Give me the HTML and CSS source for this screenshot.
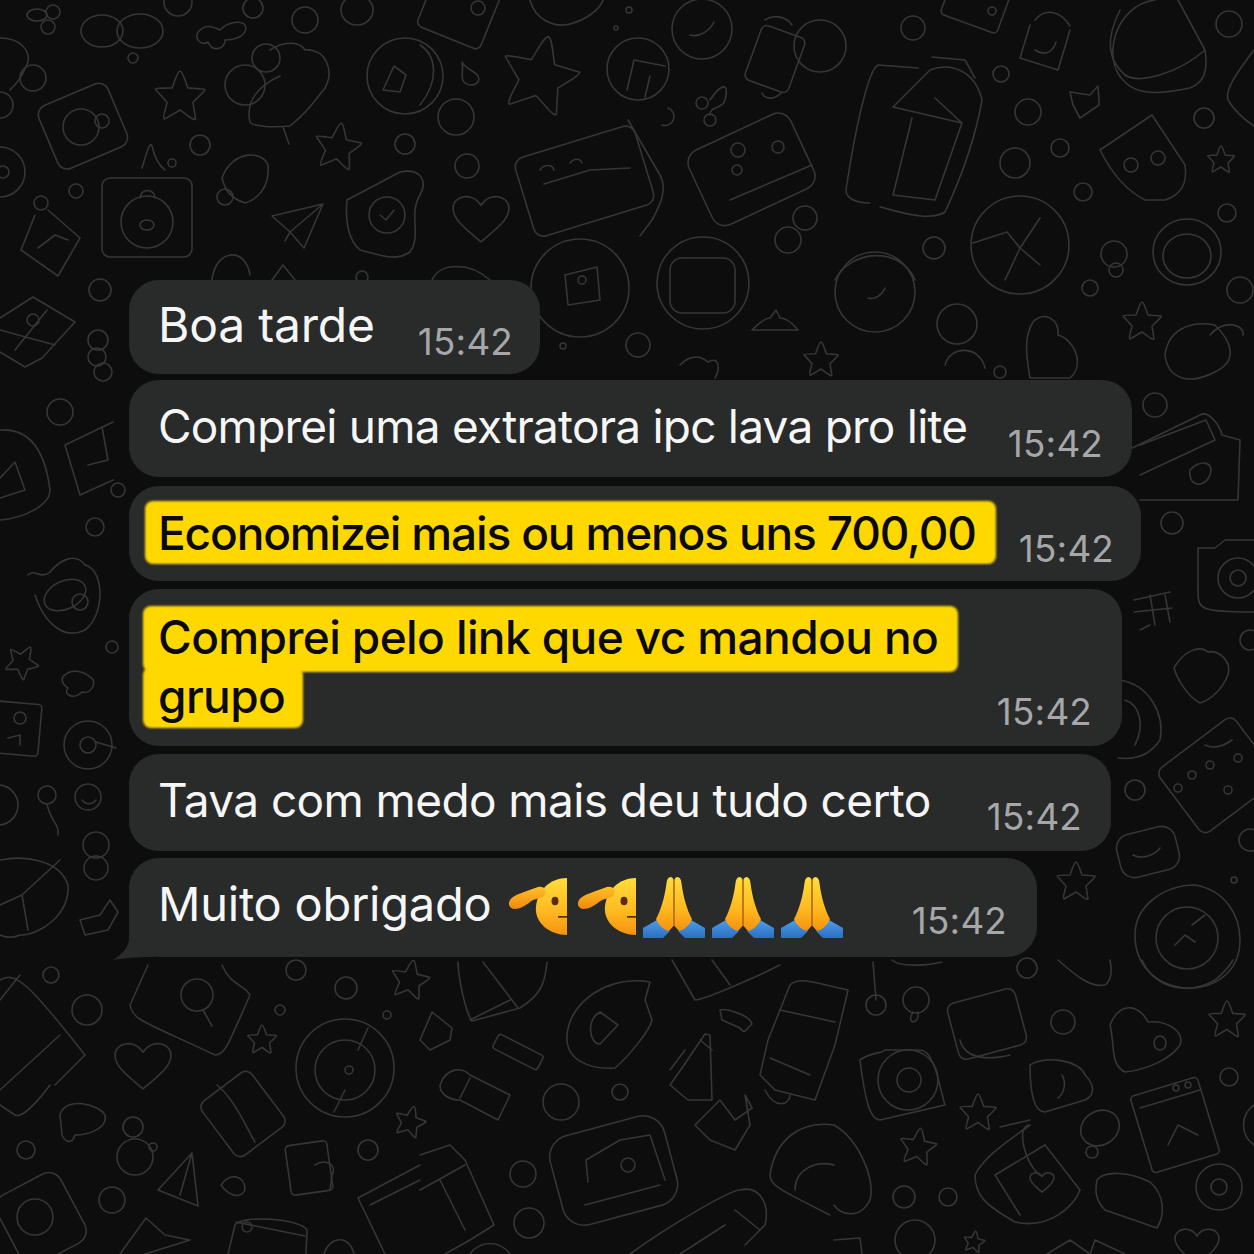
FILE: index.html
```html
<!DOCTYPE html>
<html lang="en">
<head>
    <meta charset="UTF-8">
    <title>Chat</title>
    <link rel="stylesheet" href="styles.css">
</head>
<body>
    <!-- wallpaper -->
    <svg class="doodles" viewBox="0 0 1254 1254" aria-hidden="true">
        <defs>
            <path id="star" d="M0 -1 C.1 -1 .2 -.6 .3 -.35 L.95 -.3 C1 -.25 .6 .1 .5 .2 L.6 .85 C.55 .95 .1 .55 0 .5 L-.6 .85 C-.7 .8 -.5 .3 -.5 .2 L-.95 -.3 C-.95 -.35 -.5 -.35 -.3 -.35 C-.2 -.6 -.1 -1 0 -1Z"/>
            <path id="heart" d="M0 .85 C-.4 .5 -1 .1 -1 -.35 C-1 -.8 -.3 -.95 0 -.45 C.3 -.95 1 -.8 1 -.35 C1 .1 .4 .5 0 .85Z"/>
        </defs>

        <!-- top left -->
        <ellipse cx="37" cy="15" rx="10" ry="6"/><circle cx="48" cy="27" r="7"/><circle cx="53" cy="12" r="7"/>
        <ellipse cx="102" cy="31" rx="21" ry="16"/><ellipse cx="140" cy="31" rx="23" ry="17"/>
        <circle cx="178" cy="2" r="14"/><circle cx="253" cy="8" r="10"/><circle cx="305" cy="20" r="13"/><ellipse cx="357" cy="10" rx="16" ry="15"/>
        <path d="M198 32 C205 24 212 26 220 30 C230 20 245 20 246 28 C245 38 232 40 225 40 C225 50 212 52 208 42 C202 46 194 40 198 32Z"/>
        <use href="#star" transform="translate(180 97) scale(26)"/>
        <rect x="45" y="92" width="75" height="68" rx="10" transform="rotate(-23 83 125)"/><circle cx="81" cy="127" r="18"/><circle cx="102" cy="121" r="7"/>
        <path d="M0 38 C20 38 30 50 28 62 C22 78 15 85 10 90"/><circle cx="33" cy="78" r="13"/><circle cx="0" cy="105" r="13"/>
        <circle cx="0" cy="172" r="25"/><circle cx="3" cy="172" r="6"/>
        <circle cx="133" cy="58" r="5"/><circle cx="76" cy="191" r="7"/>
        <circle cx="266" cy="58" r="14"/><circle cx="245" cy="85" r="20"/><path d="M270 50 C285 40 300 42 305 50 C325 48 335 70 325 88 C315 100 310 110 290 126 C270 128 252 126 250 122 C245 100 260 85 280 76"/><path d="M283 127 L289 144"/>
        <circle cx="405" cy="76" r="38"/><path d="M394 66 L406 75 L400 92 L383 90Z"/>
        <use href="#star" transform="translate(338 147) rotate(8) scale(24)"/>
        <circle cx="200" cy="145" r="10"/><circle cx="405" cy="144" r="10"/>
        <rect x="102" y="178" width="90" height="79" rx="8"/><circle cx="147" cy="222" r="26"/><ellipse cx="147" cy="225" rx="7" ry="5"/><path d="M140 198 C140 188 155 188 155 198"/><circle cx="172" cy="163" r="4"/><path d="M142 168 C146 155 150 140 152 146 C154 155 158 165 165 170"/>
        <circle cx="41" cy="203" r="7"/><path d="M48 210 L80 238 L58 276 L21 250 L35 215M38 248 L55 235 L68 240"/>
        <path d="M222 178 C232 150 262 150 268 165 C270 190 255 200 245 203 C230 198 225 190 222 178Z"/><circle cx="225" cy="197" r="8"/>
        <path d="M272 216 L323 204 L304 248 L290 232 Z M323 204 L290 232 L285 241"/>
        <path d="M347 200 L400 172 C420 168 428 180 420 195 C408 215 422 235 410 252 C395 262 380 255 360 250 C348 240 345 220 347 200Z"/><circle cx="387" cy="215" r="18"/><path d="M380 215 L386 220 L394 210"/>
        <path d="M212 280 C215 250 245 245 250 275"/><circle cx="362" cy="277" r="6"/><path d="M272 280 L283 265 L295 280"/>

        <!-- top middle -->
        <rect x="425" y="-22" width="68" height="62" rx="6" transform="rotate(22 459 9)"/><circle cx="478" cy="8" r="7"/>
        <path d="M530 0 C535 20 555 28 570 24 C585 20 600 10 603 0"/><circle cx="629" cy="10" r="3"/><circle cx="616" cy="28" r="2"/>
        <use href="#star" transform="translate(540 76) rotate(12) scale(40)"/>
        <path d="M462 62 C466 70 474 70 478 76 C482 84 470 88 464 82 C460 78 464 72 462 62Z"/>
        <path d="M420 45 C436 55 440 80 420 105"/>
        <circle cx="456" cy="117" r="18"/><circle cx="467" cy="166" r="12"/>
        <use href="#heart" transform="translate(481 218) scale(28)"/>
        <circle cx="638" cy="69" r="31"/><path d="M627 90 L634 60 L665 66M645 97 L650 76"/>
        <circle cx="702" cy="29" r="30"/><path d="M690 35 C700 38 710 30 714 22"/>
        <rect x="752" y="30" width="46" height="58" rx="6" transform="rotate(20 775 59)"/><path d="M765 20 C772 15 785 15 792 25M762 93 C765 100 775 100 782 92"/>
        <circle cx="820" cy="46" r="26"/>
        <path d="M710 100 C720 85 730 80 725 100 C722 110 710 105 710 115"/><circle cx="702" cy="103" r="6"/><circle cx="710" cy="120" r="6"/>
        <path d="M668 108 A9 9 0 1 1 662 125"/>
        <rect x="522" y="140" width="125" height="82" rx="10" transform="rotate(-17 585 181)"/><path d="M544 184 L590 170 L630 168 M628 120 L660 175 C668 190 660 205 652 220 L640 236"/><path d="M540 170 C544 164 552 164 554 170M570 163 C574 158 580 158 582 163"/>
        <rect x="695" y="128" width="112" height="82" rx="14" transform="rotate(-25 752 168)"/><circle cx="738" cy="150" r="7"/><circle cx="778" cy="147" r="6"/><circle cx="737" cy="170" r="5"/><path d="M730 200 L812 165"/>
        <circle cx="805" cy="218" r="12"/><circle cx="788" cy="240" r="13"/>
        <circle cx="580" cy="288" r="49"/><path d="M565 275 L597 267 L600 300 L568 305Z"/><circle cx="582" cy="280" r="4"/>
        <circle cx="703" cy="283" r="46"/><rect x="670" y="258" width="65" height="55" rx="12"/>
        <path d="M432 280 C440 262 470 262 490 280"/>

        <!-- top right -->
        <rect x="945" y="-15" width="60" height="40" rx="4" transform="rotate(20 975 5)"/><circle cx="992" cy="11" r="4"/>
        <path d="M1030 25 L1020 58 L1058 70 L1070 30 M1035 20 C1045 8 1060 10 1070 26"/><path d="M1035 50 C1042 55 1052 55 1056 42"/>
        <path d="M1155 0 C1115 5 1100 60 1125 82 C1140 98 1170 92 1190 88 C1205 82 1208 70 1205 50 L1178 0"/><path d="M1125 75 C1140 85 1180 72 1205 50"/><path d="M1120 10 C1105 40 1108 60 1125 75"/>
        <circle cx="1229" cy="24" r="13"/><circle cx="913" cy="28" r="12"/>
        <path d="M878 65 L918 68 M878 65 C868 70 855 130 846 190 C846 198 855 203 870 203"/>
        <path d="M893 107 L930 70 C950 62 975 70 982 100 C975 140 960 180 945 212 C930 222 900 212 880 207"/><path d="M893 107 L962 123 L935 200 L893 195 L912 118M935 98 L962 123M932 57 L965 60 L975 78"/>
        <circle cx="1001" cy="74" r="8"/><circle cx="1028" cy="112" r="13"/><circle cx="1015" cy="163" r="15"/><circle cx="1060" cy="148" r="9"/><circle cx="1083" cy="192" r="9"/>
        <circle cx="1204" cy="118" r="10"/><use href="#star" transform="translate(1221 160) scale(14)"/><circle cx="1227" cy="213" r="9"/>
        <path d="M1070 92 L1090 95 L1098 86 L1099 100 L1099 105 L1080 118 L1073 105Z"/>
        <path d="M1100 150 L1152 115 L1185 165 C1188 185 1180 195 1165 200 L1145 200 C1125 190 1110 170 1100 150Z"/><circle cx="1131" cy="165" r="7"/><circle cx="1158" cy="158" r="7"/>
        <circle cx="1020" cy="245" r="49"/><path d="M973 243 L1007 232 L1020 248 L1040 218 M1020 248 L1005 280 M1020 248 L1040 265"/>
        <circle cx="934" cy="248" r="11"/><path d="M835 280 C850 250 900 245 915 280"/>
        <circle cx="1114" cy="254" r="13"/><circle cx="1116" cy="270" r="7"/>
        <ellipse cx="1187" cy="252" rx="34" ry="33"/><ellipse cx="1187" cy="256" rx="24" ry="22"/>
        <path d="M1254 50 C1235 75 1225 90 1228 100 C1235 112 1245 120 1254 126"/>

        <!-- left edge -->
        <path d="M0 318 L33 297 L75 322 L42 358 L25 367 L0 352M0 330 L55 345M15 350 L47 310"/><circle cx="33" cy="320" r="6"/>
        <circle cx="100" cy="290" r="11"/><circle cx="98" cy="340" r="10"/><circle cx="97" cy="357" r="9"/><circle cx="103" cy="372" r="9"/>
        <circle cx="60" cy="412" r="13"/>
        <path d="M0 430 C30 428 45 450 50 490 C50 505 25 518 0 520M0 478 L15 462 L25 490 L0 498"/>
        <path d="M65 445 L113 422 M65 445 L80 495 L113 480"/><path d="M102 427 L108 460 L88 465"/><circle cx="118" cy="490" r="7"/>
        <circle cx="95" cy="527" r="9"/>
        <path d="M28 575 C35 568 40 580 50 572 C60 560 75 552 85 565 C105 570 105 615 85 630 C65 640 45 625 35 595"/><ellipse cx="65" cy="595" rx="22" ry="14" transform="rotate(-25 65 595)"/><circle cx="80" cy="602" r="8"/>
        <circle cx="112" cy="647" r="6"/>
        <use href="#star" transform="translate(22 662) rotate(30) scale(17)"/>
        <path d="M65 675 C72 668 85 672 90 677 C98 680 92 695 82 692 C75 700 62 695 68 688 C62 684 60 678 65 675Z"/>
        <rect x="-22" y="702" width="62" height="52" rx="4" transform="rotate(5 9 728)"/><circle cx="20" cy="718" r="6"/><path d="M8 738 L20 735 L20 745"/>
        <circle cx="88" cy="745" r="24"/><circle cx="88" cy="745" r="8"/><path d="M96 742 L116 748"/>
        <circle cx="-2" cy="805" r="20"/><circle cx="47" cy="795" r="9"/><path d="M47 804 C50 820 60 825 58 835"/>
        <circle cx="88" cy="797" r="13"/><path d="M82 800 C86 805 92 805 96 800"/>
        <circle cx="96" cy="845" r="13"/><circle cx="96" cy="868" r="12"/>
        <path d="M0 860 C25 855 60 860 68 885 C70 915 40 935 20 935 C10 940 0 935 0 935M60 860 L22 895 L28 930M22 895 L0 905"/>
        <path d="M80 920 L100 915 L110 900 L118 912 L108 930 L85 935Z"/>

        <!-- right edge -->
        <use href="#star" transform="translate(1142 322) scale(20)"/>
        <path d="M1165 355 C1168 330 1190 320 1215 325 C1230 340 1240 360 1215 372 C1190 385 1168 380 1165 355Z"/><path d="M1210 335 C1225 318 1245 325 1243 335"/>
        <circle cx="1240" cy="290" r="13"/><circle cx="1155" cy="405" r="12"/>
        <path d="M1128 450 L1200 415 C1208 410 1220 425 1222 435 L1240 440 L1238 500 L1140 500"/><path d="M1140 445 L1206 420 L1215 440 L1140 475"/><path d="M1190 470 C1198 460 1215 460 1210 475 C1205 488 1188 488 1190 470Z"/>
        <circle cx="1172" cy="523" r="11"/>
        <path d="M1198 590 L1198 548 L1215 548 L1225 540 L1254 540"/><path d="M1198 590 C1198 610 1200 612 1254 612"/><circle cx="1238" cy="578" r="20"/><circle cx="1238" cy="578" r="8"/>
        <path d="M1134 600 L1170 592 M1134 612 L1172 608 M1150 595 L1155 625 M1165 595 L1170 622 M1140 630 L1150 625"/>
        <path d="M1174 668 C1184 650 1200 645 1208 652 C1218 650 1232 660 1228 675 C1222 690 1210 700 1200 703 C1190 698 1178 682 1174 668Z"/><circle cx="1250" cy="640" r="10"/>
        <path d="M1120 680 C1150 685 1165 715 1160 740 C1150 755 1135 760 1118 758"/><path d="M1125 700 C1140 705 1145 725 1135 745"/>
        <rect x="1170" y="735" width="95" height="80" rx="8" transform="rotate(-37 1218 775)"/><circle cx="1178" cy="788" r="4"/><circle cx="1192" cy="775" r="4"/><circle cx="1210" cy="765" r="4"/><circle cx="1238" cy="758" r="4"/><circle cx="1228" cy="790" r="4"/><path d="M1205 745 C1215 750 1225 745 1232 740"/>
        <circle cx="1135" cy="790" r="10"/>
        <rect x="1118" y="830" width="60" height="44" rx="14" transform="rotate(-14 1148 852)"/><path d="M1133 855 C1142 860 1155 855 1160 848"/>
        <circle cx="1250" cy="840" r="11"/><circle cx="1234" cy="880" r="3"/>
        <path d="M1135 935 C1135 905 1165 885 1195 885 C1225 890 1240 915 1240 940 C1240 975 1210 990 1185 988 C1155 985 1135 965 1135 935Z"/><circle cx="1187" cy="938" r="31"/><path d="M1175 945 L1185 935 L1195 942 M1192 925 L1205 915"/>
        <use href="#star" transform="translate(1076 882) scale(20)"/>

        <!-- band over the bubbles -->
        <circle cx="638" cy="345" r="12"/><circle cx="563" cy="346" r="3"/>
        <path d="M680 365 C690 355 700 355 708 362 C720 355 720 370 715 378"/>
        <use href="#star" transform="translate(821 360) scale(18)"/>
        <path d="M752 330 L798 330 C790 320 785 318 780 318 L776 310 L770 318 C765 318 760 322 752 330Z"/>
        <circle cx="875" cy="292" r="40"/><path d="M868 298 C875 300 882 295 885 288"/>
        <circle cx="957" cy="324" r="20"/><path d="M945 365 C950 345 980 345 985 368"/>
        <path d="M1033 322 C1045 310 1060 320 1058 335 C1075 340 1085 365 1070 378 L1030 378 C1025 350 1025 335 1033 322Z"/>
        <circle cx="1090" cy="288" r="8"/><circle cx="1000" cy="372" r="6"/>

        <!-- bottom left -->
        <path d="M0 980 C15 970 30 985 85 1055 L55 1085 M0 1000 L20 975 M0 1090 L60 1035M0 1105 L15 1115 C25 1120 50 1085 50 1085"/><circle cx="87" cy="1010" r="15"/><circle cx="51" cy="975" r="8"/>
        <path d="M148 965 L130 1005 C132 1020 145 1022 215 1055 C225 1055 228 1045 250 995 C245 985 230 985 222 965"/><circle cx="197" cy="995" r="16"/><path d="M203 1010 L212 1026"/>
        <use href="#star" transform="translate(262 1040) scale(15)"/>
        <circle cx="280" cy="1010" r="5"/><circle cx="296" cy="970" r="10"/><circle cx="346" cy="988" r="11"/><circle cx="387" cy="1015" r="4"/>
        <use href="#star" transform="translate(410 980) rotate(10) scale(20)"/>
        <circle cx="345" cy="1068" r="49"/><circle cx="345" cy="1070" r="30"/><circle cx="349" cy="1070" r="4"/><path d="M334 1112 L345 1090 M368 1028 L358 1050"/>
        <use href="#heart" transform="translate(143 1065) scale(28)"/>
        <rect x="212" y="1082" width="62" height="68" rx="8" transform="rotate(-37 240 1115)"/><path d="M217 1085 C235 1100 245 1125 255 1142"/>
        <path d="M60 1115 C65 1095 100 1105 105 1115 C108 1130 85 1135 75 1135 C72 1145 65 1142 62 1135Z"/>
        <circle cx="133" cy="1127" r="10"/><circle cx="135" cy="1157" r="18"/><circle cx="153" cy="1147" r="4"/>
        <path d="M192 1153 L158 1190 L198 1206Z M192 1153 L180 1195"/>
        <circle cx="26" cy="1150" r="9"/><circle cx="112" cy="1200" r="13"/>
        <path d="M221 1185 C230 1172 245 1175 245 1190 C240 1200 228 1195 221 1185Z"/>
        <rect x="288" y="1143" width="42" height="50" rx="4" transform="rotate(-8 309 1168)"/><path d="M315 1165 C325 1158 338 1165 332 1175 L330 1190"/>
        <circle cx="368" cy="1150" r="10"/><use href="#star" transform="translate(410 1122) rotate(15) scale(16)"/>
        <rect x="5" y="1180" width="72" height="78" rx="14" transform="rotate(-28 41 1219)"/><circle cx="35" cy="1217" r="18"/>
        <path d="M120 1254 L146 1218 L165 1235 L190 1240 L145 1254"/>
        <path d="M228 1254 L235 1225 C240 1215 300 1218 307 1230 L306 1254M236 1222 L305 1236"/><circle cx="247" cy="1227" r="5"/>
        <path d="M324 1254 C330 1235 350 1235 354 1254"/>
        <path d="M358 1198 L420 1165 M358 1198 L385 1254M370 1205 L420 1180"/>

        <!-- bottom middle -->
        <path d="M458 962 C458 975 465 1012 472 1021 L520 1008 C540 995 545 985 547 962M483 962 L518 1008M470 1020 L510 1000"/>
        <path d="M420 1040 L432 1012 L452 1028 L450 1040 L430 1050Z"/>
        <rect x="493" y="1044" width="50" height="16" rx="3" transform="rotate(27 518 1052)"/>
        <path d="M440 1085 C445 1070 460 1065 470 1075 L510 1095 L498 1120 L460 1100 C450 1100 440 1095 440 1085Z"/><path d="M460 1098 L470 1078"/>
        <circle cx="561" cy="1102" r="18"/><circle cx="620" cy="1092" r="8"/>
        <path d="M650 982 C610 975 570 1000 567 1035 C565 1060 590 1070 615 1068 C630 1055 650 1030 652 1020 L645 1000 Z"/><path d="M600 1012 C585 1020 590 1045 600 1044 L618 1025Z"/>
        <path d="M682 1068 L705 1034 L710 1035 L712 1100 L688 1100 L670 1085Z"/><path d="M670 1070 L685 1050 M700 1040 L712 1050"/>
        <path d="M720 1010 C725 1008 750 1015 752 1024 C745 1030 745 1035 740 1028 L722 1020Z"/>
        <rect x="555" y="1125" width="118" height="92" rx="22" transform="rotate(-15 612 1172)"/><path d="M586 1160 L620 1140 L650 1135 L665 1180 M586 1160 L588 1182M585 1205 L660 1185"/><circle cx="628" cy="1165" r="7"/>
        <circle cx="523" cy="1174" r="13"/><circle cx="529" cy="1223" r="15"/>
        <path d="M420 1155 L450 1145 L465 1160 L494 1225 L470 1240 L445 1254M440 1180 L465 1230 M420 1190 L465 1165"/>
        <path d="M470 1254 C480 1240 500 1240 510 1254"/>
        <path d="M720 1100 L735 1120 L752 1108 L745 1095 L750 1125 L735 1150 L710 1140 L695 1125Z"/>
        <path d="M768 1040 L790 985 C800 975 820 985 848 990 L835 1045 L815 1100 L775 1090 L760 1075 Z"/><path d="M780 1010 L835 1022M770 1058 L810 1075"/><path d="M765 1090 C775 1110 790 1105 790 1095"/>
        <path d="M672 960 L695 1000 C705 1000 760 975 780 965"/><path d="M712 960 L730 985"/>
        <path d="M630 1254 C670 1225 730 1190 740 1190 C760 1185 770 1205 765 1225 L745 1245M735 1210 L760 1230"/><path d="M680 1254 L725 1225"/>
        <path d="M770 1175 C775 1140 800 1120 834 1125M770 1175 C770 1185 780 1190 830 1215M795 1190 C795 1170 815 1160 834 1165"/>

        <!-- bottom right -->
        <path d="M873 962 L876 1000"/><circle cx="876" cy="1005" r="10"/>
        <circle cx="916" cy="1000" r="13"/><path d="M913 1012 C905 1025 920 1025 918 1012"/>
        <path d="M892 960 C900 968 930 965 942 962"/>
        <circle cx="1027" cy="968" r="10"/><circle cx="1063" cy="1022" r="12"/>
        <path d="M1058 960 C1075 975 1090 988 1105 985 C1112 980 1112 970 1110 960"/>
        <path d="M1142 960 C1155 990 1190 995 1215 980 C1225 972 1230 965 1233 960"/>
        <rect x="952" y="995" width="70" height="58" rx="8" transform="rotate(-15 987 1024)"/><path d="M960 1040 C965 1060 990 1060 1010 1055"/>
        <path d="M860 1060 C875 1050 880 1055 885 1050 L920 1050 C935 1050 940 1090 945 1105 L880 1120 C870 1120 865 1100 860 1060Z"/><circle cx="908" cy="1080" r="30"/><circle cx="909" cy="1080" r="12"/>
        <path d="M1030 1065 C1045 1055 1080 1060 1085 1075 C1095 1085 1095 1095 1085 1100 L1045 1112 C1035 1112 1030 1095 1030 1065Z"/><path d="M1062 1075 C1068 1085 1062 1095 1058 1098"/>
        <use href="#star" transform="translate(978 1113) scale(19)"/><use href="#star" transform="translate(918 1147) rotate(8) scale(19)"/>
        <path d="M1110 1025 C1120 1000 1140 1005 1148 1022 C1165 1020 1185 1030 1180 1045 C1170 1060 1145 1070 1125 1072 C1110 1065 1115 1045 1110 1025Z"/><ellipse cx="1160" cy="1043" rx="6" ry="7"/>
        <use href="#star" transform="translate(1227 1020) scale(19)"/><circle cx="1229" cy="1077" r="9"/>
        <rect x="1140" y="1085" width="70" height="80" rx="4" transform="rotate(-17 1175 1125)"/><path d="M1140 1108 L1200 1090"/><circle cx="1176" cy="1088" r="3"/><circle cx="1188" cy="1085" r="3"/><path d="M1168 1145 L1178 1125 L1198 1135"/>
        <path d="M1254 1105 C1240 1115 1240 1135 1254 1145"/>
        <circle cx="1219" cy="1187" r="23"/><circle cx="1219" cy="1187" r="8"/>
        <path d="M1097 1180 C1105 1170 1130 1172 1150 1182 C1165 1195 1165 1215 1157 1228 L1105 1210 C1095 1200 1095 1190 1097 1180Z"/>
        <use href="#heart" transform="translate(1197 1246) scale(22)"/>
        <path d="M1040 1175 C1025 1165 1015 1125 1030 1125 C1010 1140 985 1155 975 1175 C975 1195 985 1205 1015 1222 C1050 1230 1075 1205 1080 1190 L1045 1145"/>
        <path d="M995 1175 L1045 1145 M995 1175 L1020 1215"/><use href="#heart" transform="translate(1042 1182) scale(12)"/>
        <path d="M1000 1127 L1030 1120"/>
        <ellipse cx="1100" cy="1128" rx="20" ry="17" transform="rotate(-30 1100 1128)"/><circle cx="1092" cy="1152" r="6"/>
        <circle cx="904" cy="1197" r="11"/><circle cx="948" cy="1197" r="9"/>
        <path d="M834 1125 C860 1140 875 1180 870 1200 C860 1220 840 1215 834 1205"/>
        <circle cx="915" cy="1240" r="20"/><use href="#star" transform="translate(974 1242) rotate(10) scale(11)"/>
        <path d="M1047 1254 L1070 1240 L1090 1254M1090 1254 L1095 1240 L1125 1254"/>
        <path d="M834 1240 L860 1238 L862 1254"/>
    </svg>

    <div class="chat">
        <div class="bubble b1">
            <span class="msg">Boa tarde</span>
            <span class="time">15:42</span>
        </div>
        <div class="bubble b2">
            <span class="msg">Comprei uma extratora ipc lava pro lite</span>
            <span class="time">15:42</span>
        </div>
        <div class="bubble b3">
            <span class="msg mark">Economizei mais ou menos uns 700,00</span>
            <span class="time">15:42</span>
        </div>
        <div class="bubble b4">
            <div class="lines">
                <span class="msg mark">Comprei pelo link que vc mandou no</span>
                <span class="msg mark mark-short">grupo</span>
            </div>
            <span class="time">15:42</span>
        </div>
        <div class="bubble b5">
            <span class="msg">Tava com medo mais deu tudo certo</span>
            <span class="time">15:42</span>
        </div>
        <div class="bubble b6">
            <svg class="tail" viewBox="0 0 40 40" aria-hidden="true"><path d="M16 0 L16 20 C15 28 10 33 0 40 C12 38 22 37 40 37 L40 0Z"/></svg>
            <span class="msg">Muito obrigado</span>
            <div class="emojis">
                <svg class="emoji salute" viewBox="0 0 60 58" aria-hidden="true">
                    <defs>
                        <linearGradient id="skin" x1="0" y1="0" x2="0" y2="1"><stop offset="0" stop-color="#ffdd3c"/><stop offset=".6" stop-color="#ffb81f"/><stop offset="1" stop-color="#f5920f"/></linearGradient>
                        <linearGradient id="arm" x1="0" y1="0" x2="0" y2="1"><stop offset="0" stop-color="#ffc228"/><stop offset="1" stop-color="#f0880c"/></linearGradient>
                        <linearGradient id="cuff" x1="0" y1="0" x2="0" y2="1"><stop offset="0" stop-color="#4d9deb"/><stop offset="1" stop-color="#2b6fbf"/></linearGradient>
                    </defs>
                    <path fill="url(#skin)" d="M59 0 C42 0 30 12 28 28 C26 45 42 57 59 57Z"/>
                    <path fill="url(#arm)" d="M1 27 C0 20 8 17 16 14 L30 9 C37 8 40 13 36 18 C32 21 27 20 22 24 C14 31 3 34 1 27Z"/>
                    <ellipse cx="47" cy="23" rx="3.5" ry="4.3" fill="#5a2d0c"/>
                    <rect x="50" y="38" width="9" height="1.7" fill="#5a2d0c"/>
                </svg>
                <svg class="emoji salute" viewBox="0 0 60 58" aria-hidden="true">
                    <path fill="url(#skin)" d="M59 0 C42 0 30 12 28 28 C26 45 42 57 59 57Z"/>
                    <path fill="url(#arm)" d="M1 27 C0 20 8 17 16 14 L30 9 C37 8 40 13 36 18 C32 21 27 20 22 24 C14 31 3 34 1 27Z"/>
                    <ellipse cx="47" cy="23" rx="3.5" ry="4.3" fill="#5a2d0c"/>
                    <rect x="50" y="38" width="9" height="1.7" fill="#5a2d0c"/>
                </svg>
                <svg class="emoji pray" viewBox="0 0 62 62" aria-hidden="true"><use href="#hands"/></svg>
                <svg class="emoji pray" viewBox="0 0 62 62" aria-hidden="true"><use href="#hands"/></svg>
                <svg class="emoji pray" viewBox="0 0 62 62" aria-hidden="true">
                    <g id="hands">
                        <path fill="url(#cuff)" d="M0 52 L14 44 C18 50 22 54 27 55 L20 62 L0 62Z"/>
                        <path fill="url(#cuff)" d="M62 52 L48 44 C44 50 40 54 35 55 L42 62 L62 62Z"/>
                        <path fill="url(#skin)" d="M30.4 3 C28 -1 24 1 23.5 7 C22 20 18 34 13 43 C16 50 21 54 26 55 L30.4 50Z"/>
                        <path fill="url(#skin)" d="M31.6 3 C34 -1 38 1 38.5 7 C40 20 44 34 49 43 C46 50 41 54 36 55 L31.6 50Z"/>
                        <path fill="#d98410" d="M30.3 4 H31.7 V50 H30.3Z"/>
                    </g>
                </svg>
            </div>
            <span class="time">15:42</span>
        </div>
    </div>
</body>
</html>
```
FILE: styles.css
```css
* {
    margin: 0;
    padding: 0;
    box-sizing: border-box;
}

body {
    position: relative;
    width: 1254px;
    height: 1254px;
    overflow: hidden;
    background: #0d0d0d;
    font-family: Inter, "Noto Sans", sans-serif;
}

.doodles {
    position: absolute;
    left: 0;
    top: 0;
    width: 1254px;
    height: 1254px;
    fill: none;
    stroke: #363636;
    stroke-width: 1.6;
    stroke-linecap: round;
    stroke-linejoin: round;
    filter: blur(0.6px);
}

.doodles defs path {
    vector-effect: non-scaling-stroke;
}

.chat {
    position: relative;
    display: flex;
    flex-direction: column;
    align-items: flex-start;
    padding: 280px 0 0 129px;
}

.bubble {
    position: relative;
    display: flex;
    align-items: flex-start;
    background: #292a2a;
    border-radius: 30px;
    padding-left: 29px;
    color: #f6f6f6;
}

.msg {
    font-size: 46px;
    font-weight: 400;
    line-height: 60px;
    letter-spacing: -0.6px;
    white-space: nowrap;
}

.b1 .msg { font-size: 48px; letter-spacing: -0.2px; }
.b2 .msg { letter-spacing: -0.78px; }
.b3 .msg { letter-spacing: -1.14px; }
.b6 .msg { font-size: 47px; letter-spacing: -0.25px; }

.time {
    margin-left: auto;
    font-size: 36.8px;
    line-height: 40px;
    color: #a6a7a9;
    letter-spacing: 0.2px;
}

.mark {
    position: relative;
    z-index: 0;
    color: #0a0a0a;
    font-weight: 500;
}

/* the marker strokes overflow the text box on every side */
.mark::before {
    content: "";
    position: absolute;
    z-index: -1;
    left: -13px;
    right: -20px;
    top: -2px;
    bottom: -1px;
    background: #ffd800;
    border-radius: 8px;
    filter: blur(1.2px);
}

.lines {
    display: flex;
    flex-direction: column;
    align-items: flex-start;
}

.lines .msg {
    line-height: 59px;
}

.lines .mark::before {
    left: -15px;
    bottom: -5px;
}

.lines .mark-short::before {
    top: 0;
    bottom: -2px;
    right: -18px;
}

.b1 { width: 411px; height: 94px; padding-top: 15px; padding-right: 27px; }
.b2 { width: 1003px; height: 97px; margin-top: 6px; padding-top: 16px; padding-right: 29px; }
.b3 { width: 1012px; height: 95px; margin-top: 9px; padding-top: 17px; padding-right: 27px; }
.b4 { width: 993px; height: 157px; margin-top: 8px; padding-top: 19px; padding-right: 30px; }
.b5 { width: 982px; height: 97px; margin-top: 8px; padding-top: 16px; padding-right: 29px; }
.b6 { width: 908px; height: 99px; margin-top: 7px; padding-top: 16px; padding-right: 30px; }

.b1 .time { margin-top: 27px; }
.b2 .time { margin-top: 28px; }
.b3 .time { margin-top: 26px; }
.b4 .time { margin-top: 84px; }
.b5 .time { margin-top: 27px; }
.b6 .time { margin-top: 27px; }

.tail {
    position: absolute;
    left: -16px;
    bottom: -3px;
    width: 40px;
    height: 40px;
    fill: #292a2a;
}

.emojis {
    display: flex;
    margin-left: 17px;
}

.emoji {
    flex: none;
    display: block;
}

.salute {
    width: 60px;
    height: 58px;
    margin-right: 9px;
    margin-top: 4px;
}

.pray {
    width: 62px;
    height: 62px;
    margin-right: 7px;
    margin-top: 2px;
}

.salute + .pray {
    margin-left: -3px;
}
```
